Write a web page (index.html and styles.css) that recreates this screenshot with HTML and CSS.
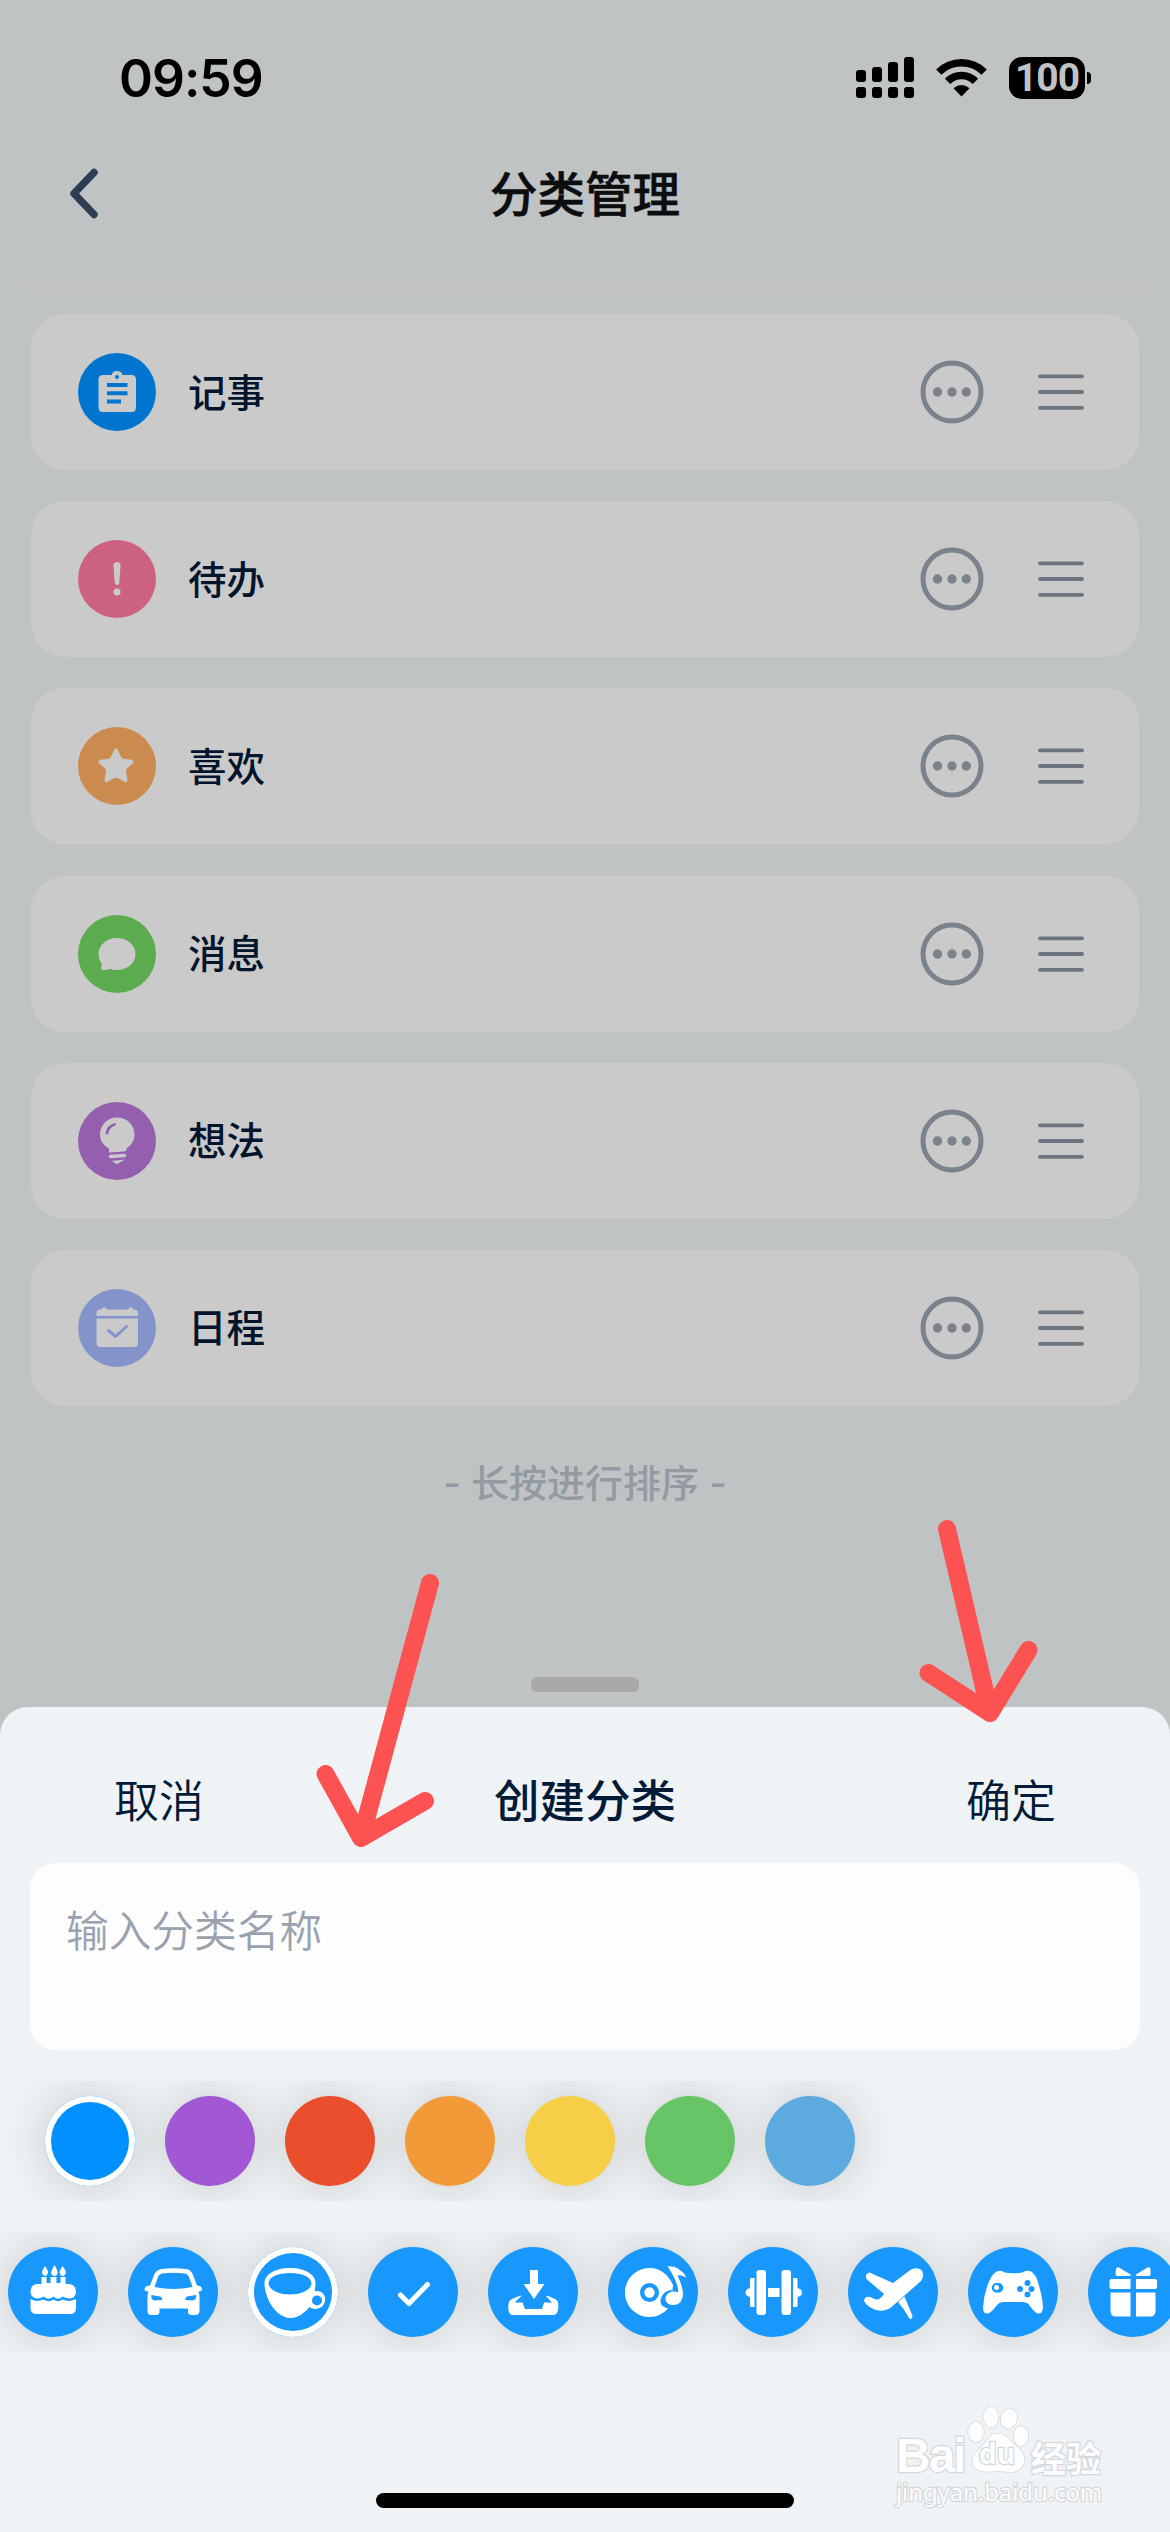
FILE: index.html
```html
<!DOCTYPE html>
<html lang="zh-CN">
<head>
<meta charset="utf-8">
<title>分类管理</title>
<link rel="stylesheet" href="styles.css">
</head>
<body>
<svg class="defs" width="0" height="0">
  <defs>
    <symbol id="more" viewBox="0 0 64 64"><circle cx="32" cy="32" r="29" fill="none" stroke="#7a838c" stroke-width="5"/><g fill="#7a838c"><circle cx="17.5" cy="32" r="4.7"/><circle cx="32" cy="32" r="4.7"/><circle cx="46.3" cy="32" r="4.7"/></g></symbol>
    <symbol id="drag" viewBox="0 0 46 40"><path d="M2 4.3H44M2 20H44M2 35.8H44" stroke="#6c7480" stroke-width="3.8" stroke-linecap="round"/></symbol>
  </defs>
</svg>
<div class="screen">
  <section class="page">
    <header class="status">
      <span class="time">09:59</span>
      <div class="status-icons">
        <svg width="58" height="42" viewBox="0 0 58 42"><g fill="#000"><rect x="0" y="13" width="10" height="12" rx="3"/><rect x="16" y="10" width="10" height="15" rx="3"/><rect x="32" y="5" width="10" height="20" rx="3"/><rect x="48" y="0" width="10" height="25" rx="3"/><rect x="0" y="30" width="10" height="11" rx="3"/><rect x="16" y="30" width="10" height="11" rx="3"/><rect x="32" y="30" width="10" height="11" rx="3"/><rect x="48" y="30" width="10" height="11" rx="3"/></g></svg>
        <svg class="wifi" width="51" height="38" viewBox="0 0 51 38"><path d="M2.800 13.200A32 32 0 0 1 48.200 13.200" fill="none" stroke="#000" stroke-width="7.500"/><path d="M11.600 22.300A19.500 19.500 0 0 1 39.400 22.300" fill="none" stroke="#000" stroke-width="7.500"/><path d="M25.500 37.500L17.500 29.300Q25.500 22.800 33.500 29.300Z"/></svg>
        <div class="battery"><span>100</span></div><i class="nub"></i>
      </div>
    </header>
    <nav class="navbar">
      <svg class="back" width="30" height="52" viewBox="0 0 30 52"><path d="M26 4.500L6 25.500L26 46.500" fill="none" stroke="#2d3e53" stroke-width="7.500" stroke-linecap="round" stroke-linejoin="round"/></svg>
      <h1>分类管理</h1>
    </nav>
    <div class="edge"></div>
    <main class="list">
      <div class="card"><span class="dot note"><svg viewBox="0 0 78 78"><path fill-rule="evenodd" d="M25 22H33.500Q34.500 18 39 18T44.500 22H53.500Q58 22 58 26.500V54.500Q58 59 53.500 59H25Q20.500 59 20.500 54.500V26.500Q20.500 22 25 22ZM29 30V34H49.500V30ZM29 38.300V42.300H49.500V38.300ZM29 46.500V50.500H43V46.500ZM39 22A2 2 0 1 0 39 26A2 2 0 1 0 39 22Z"/></svg></span><b>记事</b><svg class="more"><use href="#more"/></svg><svg class="drag"><use href="#drag"/></svg></div>
      <div class="card"><span class="dot todo"><svg viewBox="0 0 78 78"><path d="M35.500 25.500Q35.500 22 39 22T42.500 25.500L41.300 43Q41 45 39 45T36.700 43Z"/><circle cx="39" cy="52" r="3.500"/></svg></span><b>待办</b><svg class="more"><use href="#more"/></svg><svg class="drag"><use href="#drag"/></svg></div>
      <div class="card"><span class="dot like"><svg viewBox="0 0 78 78"><path d="M38 23.500L42.700 33.300L53.500 34.700L45.600 42L47.500 53L38 47.800L28.500 53L30.400 42L22.500 34.700L33.300 33.300Z" stroke="#cacaca" stroke-width="4" stroke-linejoin="round"/></svg></span><b>喜欢</b><svg class="more"><use href="#more"/></svg><svg class="drag"><use href="#drag"/></svg></div>
      <div class="card"><span class="dot msg"><svg viewBox="0 0 78 78"><path d="M39 23C49.500 23 57.500 30 57.500 39S49.500 55 39 55Q35 55 32 53.700Q28 55.500 24.500 55Q22.500 54.500 23.300 51.500L23.800 48.500Q20.500 44.500 20.500 39C20.500 30 28.500 23 39 23Z"/></svg></span><b>消息</b><svg class="more"><use href="#more"/></svg><svg class="drag"><use href="#drag"/></svg></div>
      <div class="card"><span class="dot idea"><svg viewBox="0 0 78 78"><path d="M39 15.500C49 15.500 56.500 23 56.500 32.500C56.500 39 53 43.500 48.500 46.500V48.500L46 49.500L31 50.500V46.500C25.500 43.500 22 39 22 32.500C22 23 29.500 15.500 39 15.500Z"/><path d="M32.500 54.500L46.500 53.500" stroke="#cacaca" stroke-width="3.500" stroke-linecap="round"/><path d="M33.500 59L47 57.500L39 62Z"/><path d="M29 31Q30 24.500 36.500 22.500" fill="none" stroke="#935fae" stroke-width="2.800" stroke-linecap="round"/></svg></span><b>想法</b><svg class="more"><use href="#more"/></svg><svg class="drag"><use href="#drag"/></svg></div>
      <div class="card"><span class="dot date"><svg viewBox="0 0 78 78"><path d="M18.500 27V24.500Q18.500 20.500 22.500 20.500H24V20A2.300 2.300 0 0 1 28.500 20V20.500H50.500V20A2.300 2.300 0 0 1 55 20V20.500H56Q60 20.500 60 24.500V27ZM18.500 29.500H60V54Q60 58 56 58H22.500Q18.500 58 18.500 54Z"/><path d="M30.500 41.500L37.500 47.500L48.500 37.500" fill="none" stroke="#8593cb" stroke-width="3" stroke-linecap="round" stroke-linejoin="round"/></svg></span><b>日程</b><svg class="more"><use href="#more"/></svg><svg class="drag"><use href="#drag"/></svg></div>
    </main>
    <p class="hint">- 长按进行排序 -</p>
    <div class="grabber"></div>
  </section>
  <section class="sheet">
    <div class="sheet-head"><span>取消</span><h2>创建分类</h2><span>确定</span></div>
    <div class="field">输入分类名称</div>
    <div class="strip colors">
      <i class="swatch blue selected"></i><i class="swatch purple"></i><i class="swatch red"></i><i class="swatch orange"></i><i class="swatch yellow"></i><i class="swatch green"></i><i class="swatch sky"></i>
    </div>
    <div class="strip icons">
      <span class="glyph"><svg viewBox="0 0 90 90"><path d="M33.500 30H38.500V36H42.500V30H48.500V36H52.500V30H57.500V37H61Q68 38 68 44.500Q68 51 61.500 51.500Q57 51 54.500 49.500Q50 54 45.500 49.500Q40 54 36 49.500Q33 51.500 29 51.500Q22.500 50.500 22.500 44.500Q22.500 38 29 37H33.500Z"/><path d="M22.500 52Q29 55.500 35.500 52.500Q40.500 56 45.500 52.500Q50 56 54.500 52.500Q61 55.500 68 52V61Q68 67 62 67H28.500Q22.500 67 22.500 61Z"/><path d="M37 19Q40.500 24 40 26Q39 29 37 29T34 26Q33.500 24 37 19ZM46.500 18Q50 24 49.700 26Q49 29 46.500 29T43 26Q43 24 46.500 18ZM54.500 19Q58.500 24 57.700 26Q57 29 54.700 29T51.700 26Q51 24 54.500 19Z"/></svg></span>
      <span class="glyph"><svg viewBox="0 0 90 90"><path fill-rule="evenodd" d="M34 22Q45 20.500 58 22Q63 22.500 65 28L69 38.500Q74 39 74 42Q74 44.500 70.500 44.500Q71.500 47 71.500 50V64Q71.500 68 67 68H64Q60 68 60 65V61.500H31.500V65Q31.500 68 28 68H23Q19.500 68 19.500 64V50Q19.500 47 20.500 44.500Q16.500 44.500 16.500 42Q16.500 39 22 38.500L26 28Q28.500 22.500 34 22ZM34 26.500Q31 27 30 30L26.500 40Q45 44 64.500 40L61 30Q60 27 57 26.500Q45 25 34 26.500ZM23.500 48Q22.500 52 26 53.500L34 53Q34.500 50.500 32 49.500ZM68 48L59 49.500Q56.500 51 57.500 53L65.500 53.500Q69 52 68 48Z"/></svg></span>
      <span class="glyph selected"><svg viewBox="0 0 90 90"><path fill-rule="evenodd" d="M42 21C56 21 67 27 67.500 35Q67.500 40 66.500 44.500Q70 43 74 45.500Q78 49 77 54Q75 62 67 62Q63 61.500 61.500 60C56 66 51 71 42 71C27 70 17 51 16.500 37C16 27 28 21 42 21ZM42 26C30 26 20.500 30 20.500 36.500C21 43 31 47.500 42 47.500S63 43 63.500 36.500C63.500 30 54 26 42 26ZM69 48.500A5 5 0 1 0 69 58.500A5 5 0 1 0 69 48.500Z"/></svg></span>
      <span class="glyph"><svg viewBox="0 0 90 90"><path d="M32.500 48L41 56.500L59.500 37.500" fill="none" stroke="#fff" stroke-width="5" stroke-linecap="round" stroke-linejoin="round"/></svg></span>
      <span class="glyph"><svg viewBox="0 0 90 90"><path d="M42 23H50V37H56.500L46 52L35.500 37H42Z"/><path d="M34 48.500Q25 50.500 21.500 54Q19.500 57 20.500 63Q21 68 25 68H65Q69 68 70 63Q71 57 69.500 54Q66 50.500 57.500 48.500L64 55.500H56L54 62H37L34.500 55.500H26.500Z"/></svg></span>
      <span class="glyph"><svg viewBox="0 0 90 90"><path fill-rule="evenodd" d="M41.500 21A24.500 24.500 0 1 0 60 61.500C53 60 50.500 55 54 49C56 45 61 42.500 64.500 43.500L65 38C60 27 52 21 41.500 21ZM41.500 36A9.500 9.500 0 1 1 41.500 55A9.500 9.500 0 1 1 41.500 36Z"/><circle cx="41.500" cy="45.500" r="5.200"/><path d="M59.500 19L67 20Q75 24 78.500 30.500Q72 27.500 69.500 28.500Q75 40 75 47Q74.500 57 66.500 58Q59 58.500 57.500 53Q57 46.500 64 44.500Q68 44 70 45.500Q71.500 38 59.500 19Z"/></svg></span>
      <span class="glyph"><svg viewBox="0 0 90 90"><rect x="28.500" y="23" width="9.500" height="45" rx="3"/><rect x="53.500" y="23" width="9.500" height="45" rx="3"/><rect x="40" y="41" width="11.500" height="9"/><path d="M22 32Q22 31 23 31H26.500V60H23Q22 60 22 59V50Q17.500 49 17.500 45.500T22 41ZM65 31H68.500Q69.500 31 69.500 32V41Q74 42 74 45.500T69.500 50V59Q69.500 60 68.500 60H65Z"/></svg></span>
      <span class="glyph"><svg viewBox="0 0 90 90"><path d="M63 22.500Q69 20 73.500 23Q77 28 73 34L43.500 60Q36 65.500 28 63Q19 60 16 54Q16.500 48.500 22 50L28 52.500Q32 53 36 47L18.500 32Q16.500 27 21.500 25.500L45 36Z"/><path d="M50 55L56.500 49.500L64.500 69Q64 74 61 71Q57 63 50 55Z"/></svg></span>
      <span class="glyph"><svg viewBox="0 0 90 90"><path fill-rule="evenodd" d="M28 25Q33 22.500 36.500 25.500Q45 27 54 25.500Q59 22.500 64 25Q68 28 70.500 37Q75 52 75 61Q74.500 67 69.500 66.500Q65 64 60.500 57Q58 55 54 55H35Q31.500 55 29 58Q24 65 20 66.500Q15 67 15 61Q15.500 49 20 37Q24 27 28 25ZM29.500 36A5 4.800 0 1 0 29.500 45.500A5 4.800 0 1 0 29.500 36ZM59.500 33A3 3 0 1 0 59.500 39A3 3 0 1 0 59.500 33ZM52 39A3 3 0 1 0 52 45A3 3 0 1 0 52 39ZM63.500 39A3 3 0 1 0 63.500 45A3 3 0 1 0 63.500 39ZM59.500 44.500A3 3 0 1 0 59.500 50.500A3 3 0 1 0 59.500 44.500Z"/><circle cx="28.500" cy="40.500" r="2.500"/></svg></span>
      <span class="glyph"><svg viewBox="0 0 90 90"><path d="M28 22Q28.500 19.500 31 20.500L42.500 27.500V29H29.500Q27.500 29 27.500 27ZM62.500 22Q62 19.500 59.500 20.500L48 27.500V29H61Q62.500 29 62.500 27ZM23.500 32H42.500V42H23.500Q21.500 42 21.500 40V34Q21.500 32 23.500 32ZM48 32H67Q69 32 69 34V40Q69 42 67 42H48ZM22.500 45.500H42.500V69.500H28Q22.500 69.500 22.500 64ZM48 45.500H67.500V64Q67.500 69.500 62 69.500H48Z"/></svg></span>
    </div>
    <div class="home"></div>
  </section>
  <svg class="arrows" width="1170" height="2532" viewBox="0 0 1170 2532"><g fill="none" stroke="#fc5352" stroke-width="18" stroke-linecap="round" stroke-linejoin="round"><path d="M430 1583L361 1838M325.500 1774L361 1838L425 1801"/><path d="M947 1529L990 1713M928.500 1673L990 1713L1028.500 1650"/></g></svg>
  <div class="watermark">
    <div class="brand"><span class="bai">Bai</span>
      <span class="paw"><svg width="62" height="68" viewBox="0 0 62 68"><g fill="#fcfdfe" stroke="#d5d8db" stroke-width="1.500"><ellipse cx="9" cy="26" rx="8" ry="10"/><ellipse cx="24" cy="11" rx="7.500" ry="10.500"/><ellipse cx="42" cy="12.500" rx="8" ry="10" transform="rotate(12 42 12.500)"/><ellipse cx="54" cy="30" rx="7.500" ry="10"/><path d="M31 27.500C40 27.500 43 35 49 40C58 47 60 55 54 62C47 69 38 65 31 65S14 68 8 62C2 54 8 46 15 40C21 34 23 27.500 31 27.500Z"/></g></svg><em>du</em></span>
      <span class="jy">经验</span></div>
    <div class="url">jingyan.baidu.com</div>
  </div>
</div>
</body>
</html>
```
FILE: styles.css
```css
* { box-sizing: border-box; }
body { margin: 0; background: #bfc3c4; font-family: "Noto Sans CJK SC", sans-serif; }
h1, h2, p { margin: 0; }
i, em { font-style: normal; }
.defs { position: absolute; }
.screen { position: relative; width: 1170px; height: 2532px; overflow: hidden; display: flex; flex-direction: column; }
.page { height: 1707px; flex: none; display: flex; flex-direction: column; }

.status { height: 156px; padding: 0 79px 0 119px; display: flex; justify-content: space-between; align-items: center; }
.time { font: 600 51.500px/62px Inter, sans-serif; letter-spacing: -1px; }
.status-icons { display: flex; align-items: center; }
.wifi { margin-left: 22px; }
.battery { width: 76px; height: 42px; margin-left: 22px; border-radius: 13px; background: #000; color: #bfc3c4; font: 700 39px/42px Roboto, sans-serif; letter-spacing: -1px; text-align: center; }
.nub { width: 4px; height: 12px; margin-left: 2px; border-radius: 0 4px 4px 0; background: #000; }

.navbar { height: 76px; padding: 0 68px; display: grid; grid-template-columns: 100px 1fr 100px; align-items: center; }
.navbar h1 { padding-bottom: 4px; text-align: center; font-size: 47.500px; font-weight: 500; line-height: 72px; color: #0c0d0e; -webkit-text-stroke: 0.600px #0c0d0e; }
.edge { height: 22px; margin: 41px 12px 0; border-bottom: 16px solid rgba(196, 190, 196, .25); border-radius: 0 0 44px 44px; }

.list { margin-top: 19px; padding: 0 31px; display: flex; flex-direction: column; gap: 31.200px; }
.card { height: 156px; padding: 0 55px 0 47px; display: flex; align-items: center; border-radius: 34px; background: #cacaca; }
.dot { width: 78px; height: 78px; border-radius: 50%; }
.dot svg { display: block; fill: #cacaca; }
.note { background: #0075d0; }
.todo { background: #cc627f; }
.like { background: #cb8b4e; }
.msg { background: #5cab4e; }
.idea { background: #935fae; }
.date { background: #8593cb; }
.card b { flex: 1; margin-left: 32px; padding-bottom: 5px; font-size: 38.500px; font-weight: 500; color: #03142c; }
.more { width: 64px; height: 64px; }
.drag { width: 46px; height: 40px; margin-left: 54px; }
.hint { margin-top: 48px; height: 58px; line-height: 58px; text-align: center; font-family: Inter, "Noto Sans CJK SC", sans-serif; font-size: 38px; font-weight: 500; color: #949aa1; }
.grabber { width: 108px; height: 15px; margin: 165px auto 0; border-radius: 6px; background: #a9a9a9; }

.sheet { flex: 1; display: flex; flex-direction: column; border-radius: 28px 28px 0 0; background: #eff3f6; color: #041b38; }
.sheet-head { height: 156px; padding: 26px 114px 0; display: flex; justify-content: space-between; align-items: center; font-size: 45px; font-weight: 350; }
.sheet-head h2 { font-size: 45.500px; font-weight: 500; }
.field { height: 187px; margin: 0 30px; padding: 34px 36px; border-radius: 26px; background: #fdfdfd; color: #98a2ae; font-size: 42.700px; font-weight: 350; line-height: 62px; }
.strip { flex: none; height: 120px; display: flex; align-items: center; gap: 30px; overflow: hidden; }
.colors { margin-top: 31px; padding-left: 45px; }
.icons { margin-top: 31px; padding-left: 8px; }
.swatch, .glyph { flex: none; width: 90px; height: 90px; border-radius: 50%; box-shadow: 0 0 45px rgba(50, 40, 30, .2); }
.glyph { background: #1897fc; }
.glyph svg { display: block; fill: #fff; }
.selected { box-shadow: inset 0 0 0 6px #fff, 0 0 45px rgba(50, 40, 30, .2); }
.blue { background: #0090ff; }
.purple { background: #a257d5; }
.red { background: #ea4e2c; }
.orange { background: #f19a37; }
.yellow { background: #f7ce47; }
.green { background: #67c568; }
.sky { background: #5caae0; }
.home { width: 418px; height: 15px; margin: auto auto 24px; border-radius: 8px; background: #000; }

.arrows { position: absolute; left: 0; top: 0; }
.watermark { position: absolute; left: 896px; top: 2406px; color: #fcfdfe; -webkit-text-stroke: 2.500px #d5d8db; paint-order: stroke fill; }
.brand { height: 68px; display: flex; align-items: flex-end; }
.bai { width: 71px; font: 700 48px/46px "Liberation Sans", sans-serif; margin-bottom: -5px; letter-spacing: -2px; }
.paw { position: relative; width: 62px; height: 68px; }
.paw em { position: absolute; left: 12px; top: 32px; font: 700 28px/30px "Open Sans", sans-serif; }
.jy { margin-left: 2px; font-size: 35px; font-weight: 700; line-height: 36px; margin-bottom: -1px; }
.url { margin-top: 3px; font: 400 24px/30px "Noto Sans", sans-serif; white-space: nowrap; letter-spacing: -0.100px; }
```
